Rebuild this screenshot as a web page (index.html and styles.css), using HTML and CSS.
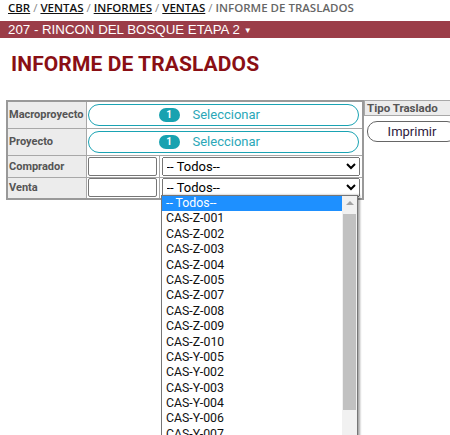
FILE: index.html
```html
<!DOCTYPE html>
<html>
<head>
<meta charset="utf-8">
<link rel="stylesheet" href="styles.css">
</head>
<body>
<div class="crumbs"><a>CBR</a><span class="sep">/</span><a>VENTAS</a><span class="sep">/</span><a>INFORMES</a><span class="sep">/</span><a>VENTAS</a><span class="sep">/</span><span class="cur">INFORME DE TRASLADOS</span></div>
<div class="projbar">207 - RINCON DEL BOSQUE ETAPA 2<span class="caret">▼</span></div>
<h1 class="title">INFORME DE TRASLADOS</h1>
<div class="forms">
  <table class="filters">
    <colgroup><col class="col-label"><col class="col-input"><col class="col-select"></colgroup>
    <tr class="tall">
      <th>Macroproyecto</th>
      <td colspan="2"><button class="pill"><span class="badge">1</span><span class="pill-text">Seleccionar</span></button></td>
    </tr>
    <tr class="tall">
      <th>Proyecto</th>
      <td colspan="2"><button class="pill"><span class="badge">1</span><span class="pill-text">Seleccionar</span></button></td>
    </tr>
    <tr>
      <th>Comprador</th>
      <td><input type="text" class="txt"></td>
      <td><select class="sel"><option>-- Todos--</option></select></td>
    </tr>
    <tr>
      <th>Venta</th>
      <td><input type="text" class="txt"></td>
      <td><select class="sel"><option>-- Todos--</option></select></td>
    </tr>
  </table>
  <div class="side">
    <div class="side-head">Tipo Traslado</div>
    <button class="print">Imprimir</button>
  </div>
</div>
<div class="dropdown">
  <ul class="opts">
    <li class="on">-- Todos--</li>
    <li>CAS-Z-001</li>
    <li>CAS-Z-002</li>
    <li>CAS-Z-003</li>
    <li>CAS-Z-004</li>
    <li>CAS-Z-005</li>
    <li>CAS-Z-007</li>
    <li>CAS-Z-008</li>
    <li>CAS-Z-009</li>
    <li>CAS-Z-010</li>
    <li>CAS-Y-005</li>
    <li>CAS-Y-002</li>
    <li>CAS-Y-003</li>
    <li>CAS-Y-004</li>
    <li>CAS-Y-006</li>
    <li>CAS-Y-007</li>
  </ul>
  <div class="scroll">
    <div class="arrow"></div>
    <div class="thumb"></div>
  </div>
</div>
</body>
</html>
```

FILE: styles.css
```css
html, body { margin: 0; padding: 0; background: #fff; }
body { width: 450px; height: 435px; overflow: hidden; position: relative; font-family: Roboto, "Liberation Sans", sans-serif; }

.crumbs {
  font-family: "Open Sans", sans-serif;
  font-weight: 600;
  font-size: 11.5px;
  line-height: 16px;
  height: 18px;
  padding-left: 8px;
  color: #666;
  white-space: nowrap;
}
.crumbs a { color: #111; text-decoration: underline; }
.crumbs .sep { color: #888; margin: 0 3px; font-weight: 400; }
.crumbs .cur { color: #666; }

.projbar {
  margin-top: 3px;
  background: #9b3d48;
  color: #fff;
  font-family: "Liberation Sans", Arial, sans-serif;
  font-size: 13.3px;
  line-height: 17px;
  height: 17px;
  padding-left: 8px;
  white-space: nowrap;
}
.projbar .caret { font-size: 8px; vertical-align: 1px; margin-left: 4px; }

.title {
  margin: 14px 0 0 11px;
  font-family: Roboto, sans-serif;
  font-weight: 700;
  font-size: 21px;
  line-height: 24px;
  color: #8a0f14;
  letter-spacing: 0.1px;
}

.forms {
  display: flex;
  align-items: flex-start;
  gap: 0;
  margin: 24px 0 0 6px;
}

.filters {
  flex: none;
  border-collapse: collapse;
  border: 2px solid #999;
  width: 356px;
  table-layout: fixed;
}
.col-label { width: 79px; }
.col-input { width: 73px; }
.col-select { width: 204px; }
.filters th, .filters td { border: 1px solid #a8a8a8; padding: 0 1px; }
.filters th {
  background: #ececec;
  color: #555;
  font-size: 11px;
  font-weight: 700;
  text-align: left;
  padding: 0 0 0 1px;
  white-space: nowrap;
  overflow: hidden;
}
.filters tr.tall { height: 27px; }
.filters tr { height: 22px; }

.pill {
  display: flex;
  align-items: center;
  width: 271px;
  height: 22px;
  border: 1px solid #1aa3b3;
  border-radius: 11px;
  background: #fff;
  padding: 0;
  margin: 0;
  font-family: Roboto, sans-serif;
}
.badge {
  margin-left: 70px;
  width: 21px;
  height: 14px;
  border-radius: 7px;
  background: #18a2b0;
  color: #fff;
  font-size: 10px;
  font-weight: 700;
  line-height: 14px;
  text-align: center;
}
.pill-text { margin-left: 13px; color: #2aa7b8; font-size: 13px; }

.txt {
  box-sizing: border-box;
  width: 69px;
  height: 19px;
  border: 1px solid #767676;
  border-radius: 2px;
  margin: 0;
  padding: 0;
  display: block;
}
.sel {
  box-sizing: border-box;
  width: 198px;
  height: 19px;
  font-family: Roboto, sans-serif;
  font-size: 13px;
  margin: 0 0 0 1px;
  display: block;
  color: #000;
}

.side { width: 90px; flex: none; }
.side-head {
  box-sizing: border-box;
  height: 16px;
  border: 1px solid #a8a8a8;
  background: #ececec;
  color: #555;
  font-size: 11.5px;
  font-weight: 700;
  line-height: 14px;
  padding-left: 2px;
  white-space: nowrap;
}
.print {
  display: block;
  margin: 5px 0 0 3px;
  width: 90px;
  height: 21px;
  border: 1px solid #666;
  border-radius: 10px;
  background: #fff;
  font-family: Roboto, sans-serif;
  font-size: 13px;
  color: #2e1a3c;
  padding: 0;
}

.dropdown {
  position: absolute;
  left: 161px;
  top: 195px;
  width: 195px;
  height: 250px;
  border: 1px solid #767676;
  background: #fff;
  display: flex;
  box-shadow: 2px 0 2px rgba(0,0,0,0.35);
}
.opts {
  list-style: none;
  margin: 0;
  padding: 0;
  flex: 1;
  font-family: Roboto, sans-serif;
  font-size: 12.3px;
  color: #111;
}
.opts li { height: 15.4px; line-height: 15.4px; padding-left: 4px; white-space: nowrap; }
.opts li.on { background: #1e90ff; color: #fff; }
.scroll { width: 15px; background: #f1f1f1; position: relative; }
.arrow {
  width: 0; height: 0;
  margin: 5px auto 0;
  border-left: 4px solid transparent;
  border-right: 4px solid transparent;
  border-bottom: 4px solid #a3a3a3;
}
.thumb {
  position: absolute;
  left: 1px; right: 1px;
  top: 18px;
  height: 196px;
  background: #c1c1c1;
}
```
